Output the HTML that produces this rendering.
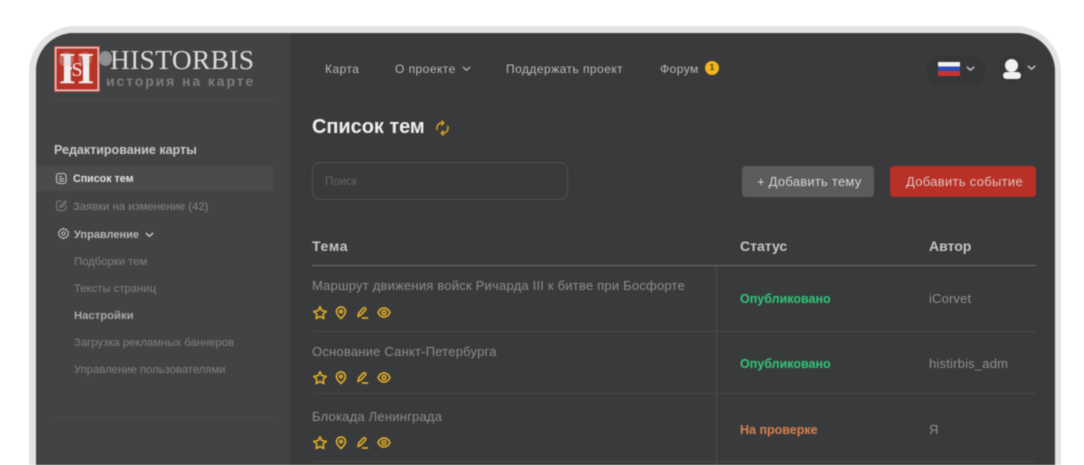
<!DOCTYPE html>
<html lang="ru"><head><meta charset="utf-8"><style>
*{box-sizing:border-box;margin:0;padding:0}
html,body{width:1084px;height:465px;overflow:hidden;background:#fff}
body{font-family:"Liberation Sans","Noto Sans CJK SC",sans-serif;position:relative}
.a{position:absolute;white-space:nowrap}
#frame{position:absolute;left:29px;top:26px;width:1032px;height:439px;border-radius:46px 46px 0 0;background:#e4e4e4;filter:blur(.5px)}
#screen{position:absolute;left:36px;top:33px;width:1019px;height:432px;border-radius:38px 38px 0 0;background:#393a3c;overflow:hidden;filter:blur(.45px)}
#side{position:absolute;left:0;top:0;width:254px;height:432px;background:#424344}
#screen .a{transform:translate(-36px,-33px)}
.hl{height:1px}
.s{font-size:11.3px;color:#8f9091}
.ic{fill:none;stroke:#dcaa25;stroke-width:1.7;stroke-linecap:round;stroke-linejoin:round}
.nav{font-size:12px;color:#b9b9b9;letter-spacing:.46px}
.ti{font-size:13px;color:#8c8d8e;letter-spacing:.21px;font-weight:400}
.th{font-size:14px;font-weight:700;color:#c6c6c6}
</style></head><body>
<div id="frame"></div>
<div id="screen">
<div id="side"></div>

<!-- logo -->
<div class="a" style="left:54px;top:46px;width:46px;height:46px;background:#b93226;border:1px solid #c8473a;box-shadow:inset 0 0 0 1.5px #d8d0ca"></div>
<div class="a" style="left:59.500px;top:44px;font:700 44px/50px 'Liberation Serif',serif;color:#eee">H</div>
<div class="a" style="left:71.500px;top:59px;width:11px;height:22px;background:#b93226"></div>
<div class="a" style="left:71.500px;top:60px;font:400 20px/20px 'Liberation Serif',serif;color:#eee">S</div>
<div class="a" style="left:59px;top:52px;width:15px;height:15px;border-radius:50%;background:rgba(215,215,215,.34)"></div>
<div class="a" style="left:78px;top:52px;width:14px;height:14px;border-radius:50%;background:rgba(215,215,215,.26)"></div>
<div class="a" style="left:99px;top:51px;width:13px;height:15px;border-radius:50%;background:#8f9091"></div>
<div class="a" style="left:110px;top:43px;font:400 27.500px/33px 'Liberation Serif',serif;color:#dcdcdc;letter-spacing:.3px">HISTORBIS</div>
<div class="a" style="left:106px;top:73px;font:700 14px/17px 'Liberation Sans',sans-serif;color:#7c7d7e;letter-spacing:1.9px">история на карте</div>
<div class="a hl" style="left:54px;top:99px;width:218px;background:#4c4d4e"></div>

<!-- sidebar -->
<div class="a" style="left:54px;top:142px;font-size:12.500px;font-weight:700;color:#c9c9c9;line-height:16px">Редактирование карты</div>
<div class="a" style="left:36px;top:166px;width:237px;height:25px;background:#4a4b4d"></div>
<svg class="a" style="left:55px;top:172px" width="13" height="13" viewBox="0 0 13 13" fill="none" stroke="#c8c8c8" stroke-width="1.100"><rect x="1.500" y="1.500" width="9.500" height="10" rx="2.500"/><path d="M4 4.500h3M4 6.800h5M4 9h5"/></svg>
<div class="a" style="left:73px;top:172px;font-size:10.700px;font-weight:700;color:#e2e2e2;line-height:14px">Список тем</div>
<svg class="a" style="left:55px;top:199px" width="13" height="13" viewBox="0 0 13 13" fill="none" stroke="#7f8081" stroke-width="1.100" stroke-linecap="round"><path d="M6 2H3.500A2 2 0 0 0 1.500 4v5.500a2 2 0 0 0 2 2H9a2 2 0 0 0 2-2V7"/><path d="M5 8.500l.4-2L10 2l1.300 1.300-4.400 4.700z"/></svg>
<div class="a s" style="left:73px;top:200px;font-size:11.300px;line-height:14px;color:#858687">Заявки на изменение (42)</div>
<svg class="a" style="left:57px;top:227px" width="13" height="13" viewBox="0 0 13 13" fill="none" stroke="#b9b9b9" stroke-width="1.100" stroke-linejoin="round"><path d="M6.500 1l1 1.500 1.900-.2.600 1.700 1.500 1L11 6.500l.5 1.500-1.500 1-.6 1.700-1.900-.2-1 1.500-1-1.500-1.900.2L3 9 1.500 8 2 6.500 1.500 5 3 4l.6-1.700 1.900.2z"/><circle cx="6.500" cy="6.500" r="1.700"/></svg>
<div class="a" style="left:74px;top:228px;font-size:11px;font-weight:700;color:#b8b8b8;line-height:14px">Управление</div>
<svg class="a" style="left:145px;top:232px" width="9" height="6" viewBox="0 0 9 6" fill="none" stroke="#c8c8c8" stroke-width="1.400" stroke-linecap="round"><path d="M1.200 1.300L4.500 4.300 7.800 1.300"/></svg>
<div class="a s" style="left:74px;top:255px;line-height:14px;color:#808182">Подборки тем</div>
<div class="a s" style="left:74px;top:282px;line-height:14px;color:#808182">Тексты страниц</div>
<div class="a s" style="left:74px;top:309px;line-height:14px;font-weight:700;color:#a9a9a9">Настройки</div>
<div class="a s" style="left:74px;top:336px;line-height:14px;color:#808182">Загрузка рекламных баннеров</div>
<div class="a s" style="left:74px;top:363px;line-height:14px;color:#808182">Управление пользователями</div>
<div class="a hl" style="left:54px;top:417px;width:218px;background:#4c4d4e"></div>

<!-- nav -->
<div class="a nav" style="left:325px;top:62px;line-height:15px">Карта</div>
<div class="a nav" style="left:395px;top:62px;line-height:15px">О проекте</div>
<svg class="a" style="left:462px;top:66px" width="9" height="6" viewBox="0 0 9 6" fill="none" stroke="#b9b9b9" stroke-width="1.300" stroke-linecap="round"><path d="M1.200 1.200L4.500 4.200 7.800 1.200"/></svg>
<div class="a nav" style="left:506px;top:62px;line-height:15px">Поддержать проект</div>
<div class="a nav" style="left:660px;top:62px;line-height:15px">Форум</div>
<div class="a" style="left:705px;top:61px;width:14px;height:14px;border-radius:50%;background:#f3b51d;color:#4a3a10;font-size:8px;font-weight:700;line-height:14px;text-align:center">1</div>

<!-- lang/user -->
<div class="a" style="left:926px;top:55px;width:60px;height:30px;border-radius:15px;background:#353638"></div>
<div class="a" style="left:938px;top:62px;width:22px;height:14px;background:linear-gradient(#f2f2f2 0 33%,#2c4fb5 33% 66%,#c8322f 66%)"></div>
<svg class="a" style="left:966px;top:66px" width="9" height="6" viewBox="0 0 9 6" fill="none" stroke="#c8c8c8" stroke-width="1.400" stroke-linecap="round"><path d="M1.200 1.200L4.500 4.200 7.800 1.200"/></svg>
<div class="a" style="left:999px;top:55px;width:26px;height:28px;border-radius:14px;background:#353638"></div>
<div class="a" style="left:1005px;top:59px;width:13px;height:13px;border-radius:50%;background:#f0f0f0"></div>
<div class="a" style="left:1003px;top:72px;width:18px;height:7px;border-radius:4px;background:#f0f0f0"></div>
<svg class="a" style="left:1027px;top:65px" width="9" height="6" viewBox="0 0 9 6" fill="none" stroke="#c8c8c8" stroke-width="1.400" stroke-linecap="round"><path d="M1.200 1.200L4.500 4.200 7.800 1.200"/></svg>

<!-- heading -->
<div class="a" style="left:312px;top:115px;font-size:20px;font-weight:700;color:#efefef;line-height:25px;letter-spacing:-.05px">Список тем</div>
<svg class="a" style="left:435px;top:120px" width="15" height="16" viewBox="0 0 15 16" fill="none" stroke="#d6a31f" stroke-width="1.500" stroke-linecap="round" stroke-linejoin="round"><path d="M2.200 9.500A5.200 5.200 0 0 1 8.500 3"/><path d="M6.800 1l2 2-2 1.900"/><path d="M12.800 6.500A5.200 5.200 0 0 1 6.500 13"/><path d="M8.200 15l-2-2 2-1.900"/></svg>

<!-- search + buttons -->
<div class="a" style="left:312px;top:162px;width:256px;height:38px;border:1px solid #4f5052;border-radius:8px"></div>
<div class="a" style="left:325px;top:175px;font-size:11.500px;line-height:14px;color:#636466">Поиск</div>
<div class="a" style="left:742px;top:166px;width:132px;height:31px;border-radius:4px;background:#5b5c5d"></div>
<div class="a" style="left:757px;top:174px;font-size:13px;line-height:16px;color:#d6d6d6;letter-spacing:.24px">+ Добавить тему</div>
<div class="a" style="left:890px;top:166px;width:146px;height:31px;border-radius:4px;background:#b83026"></div>
<div class="a" style="left:906px;top:174px;font-size:13px;line-height:16px;color:#dfc5c2;letter-spacing:.3px">Добавить событие</div>

<!-- table head -->
<div class="a th" style="left:312px;top:238px;line-height:17px;letter-spacing:.7px">Тема</div>
<div class="a th" style="left:740px;top:238px;line-height:17px">Статус</div>
<div class="a th" style="left:929px;top:238px;line-height:17px">Автор</div>
<div class="a hl" style="left:312px;top:265px;width:724px;background:#6a6b6c"></div>
<div class="a" style="left:716px;top:266px;width:1px;height:199px;background:#4a4b4d"></div>
<div class="a hl" style="left:312px;top:331px;width:724px;background:#48494b"></div>
<div class="a hl" style="left:312px;top:393px;width:724px;background:#48494b"></div>
<div class="a hl" style="left:312px;top:461px;width:724px;background:#48494b"></div>

<!-- rows -->
<div class="a ti" style="left:312px;top:278px;line-height:16px">Маршрут движения войск Ричарда III к битве при Босфорте</div>
<div class="a ti" style="left:312px;top:344px;line-height:16px">Основание Санкт-Петербурга</div>
<div class="a ti" style="left:312px;top:409px;line-height:16px">Блокада Ленинграда</div>

<svg class="a" style="left:312px;top:305px" width="80" height="15" viewBox="0 0 80 15"><g class="ic"><path d="M8 1.800l1.900 3.900 4.300.6-3.100 3 .7 4.200L8 11.500l-3.800 2 .7-4.200-3.100-3 4.300-.6z"/><path d="M29 13.500c-2.800-2.500-4.500-4.500-4.500-7a4.500 4.500 0 0 1 9 0c0 2.500-1.700 4.500-4.500 7z"/><circle cx="29" cy="6.500" r="1.300"/><path d="M46 11.500l.7-3.500 4.500-4.800a1.400 1.400 0 0 1 2.200 2l-4.600 4.800zM50.500 13h5"/><path d="M66 7.500c1.500-3 3.800-4.500 6-4.500s4.500 1.500 6 4.500c-1.500 3-3.800 4.500-6 4.500s-4.500-1.500-6-4.500z"/><circle cx="72" cy="7.500" r="1.900"/></g></svg>
<svg class="a" style="left:312px;top:370px" width="80" height="15" viewBox="0 0 80 15"><g class="ic"><path d="M8 1.800l1.900 3.900 4.300.6-3.100 3 .7 4.200L8 11.500l-3.800 2 .7-4.200-3.100-3 4.300-.6z"/><path d="M29 13.500c-2.800-2.500-4.500-4.500-4.500-7a4.500 4.500 0 0 1 9 0c0 2.500-1.700 4.500-4.500 7z"/><circle cx="29" cy="6.500" r="1.300"/><path d="M46 11.500l.7-3.500 4.500-4.800a1.400 1.400 0 0 1 2.200 2l-4.600 4.800zM50.500 13h5"/><path d="M66 7.500c1.500-3 3.800-4.500 6-4.500s4.500 1.500 6 4.500c-1.500 3-3.800 4.500-6 4.500s-4.500-1.500-6-4.500z"/><circle cx="72" cy="7.500" r="1.900"/></g></svg>
<svg class="a" style="left:312px;top:435px" width="80" height="15" viewBox="0 0 80 15"><g class="ic"><path d="M8 1.800l1.900 3.900 4.300.6-3.100 3 .7 4.200L8 11.500l-3.800 2 .7-4.200-3.100-3 4.300-.6z"/><path d="M29 13.500c-2.800-2.500-4.500-4.500-4.500-7a4.500 4.500 0 0 1 9 0c0 2.500-1.700 4.500-4.500 7z"/><circle cx="29" cy="6.500" r="1.300"/><path d="M46 11.500l.7-3.500 4.500-4.800a1.400 1.400 0 0 1 2.200 2l-4.600 4.800zM50.500 13h5"/><path d="M66 7.500c1.500-3 3.800-4.500 6-4.500s4.500 1.500 6 4.500c-1.500 3-3.800 4.500-6 4.500s-4.500-1.500-6-4.500z"/><circle cx="72" cy="7.500" r="1.900"/></g></svg>

<div class="a" style="left:740px;top:291px;font-size:12.500px;font-weight:700;line-height:16px;color:#2fc878">Опубликовано</div>
<div class="a" style="left:740px;top:356px;font-size:12.500px;font-weight:700;line-height:16px;color:#2fc878">Опубликовано</div>
<div class="a" style="left:740px;top:422px;font-size:12.500px;font-weight:700;line-height:16px;color:#d9814f">На проверке</div>
<div class="a" style="left:929px;top:291px;font-size:13px;line-height:16px;color:#8f9091;letter-spacing:.15px">iCorvet</div>
<div class="a" style="left:929px;top:356px;font-size:13px;line-height:16px;color:#8f9091;letter-spacing:.2px">histirbis_adm</div>
<div class="a" style="left:929px;top:422px;font-size:13px;line-height:16px;color:#8f9091">Я</div>
</div>
</body></html>
